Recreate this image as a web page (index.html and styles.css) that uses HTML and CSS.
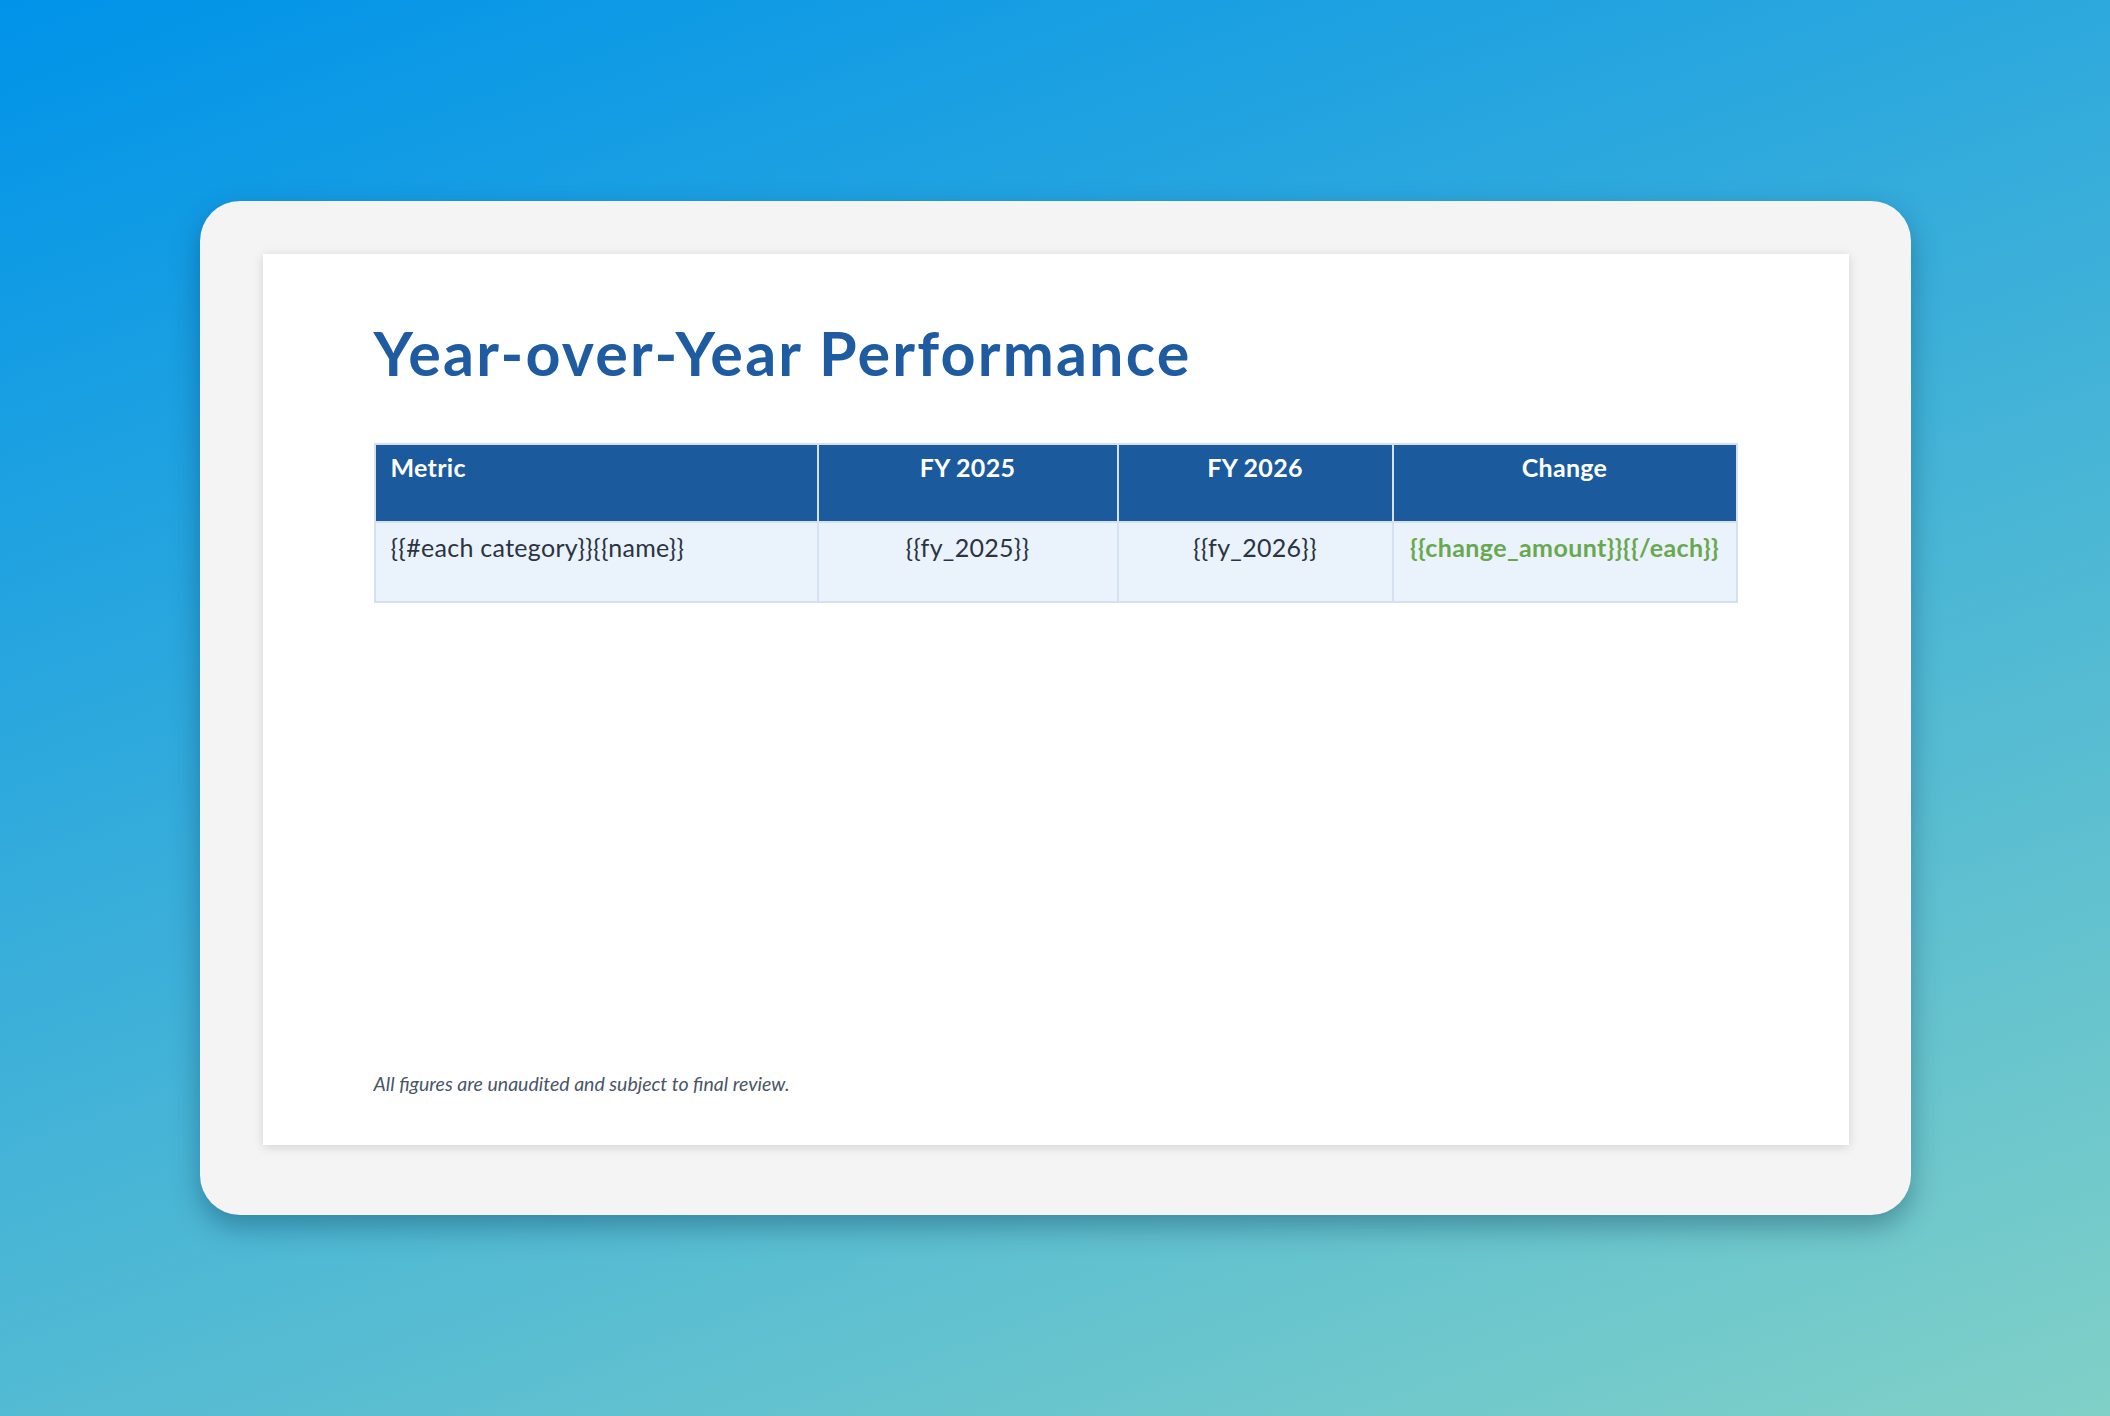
FILE: index.html
```html
<!DOCTYPE html>
<html lang="en">
<head>
<meta charset="utf-8">
<title>Year-over-Year Performance</title>
<link rel="stylesheet" href="styles.css">
</head>
<body>
<div class="stage">
  <div class="card">
    <div class="paper">
      <h1 class="title">Year-over-Year Performance</h1>
      <table class="perf">
        <thead>
          <tr>
            <th class="c-metric">Metric</th>
            <th class="c-2025">FY 2025</th>
            <th class="c-2026">FY 2026</th>
            <th class="c-change">Change</th>
          </tr>
        </thead>
        <tbody>
          <tr>
            <td class="c-metric">{{#each category}}{{name}}</td>
            <td class="c-2025">{{fy_2025}}</td>
            <td class="c-2026">{{fy_2026}}</td>
            <td class="c-change change">{{change_amount}}{{/each}}</td>
          </tr>
        </tbody>
      </table>
      <p class="note">All figures are unaudited and subject to final review.</p>
    </div>
  </div>
</div>
</body>
</html>
```

FILE: styles.css
```css
html, body {
  margin: 0;
  padding: 0;
  height: 100%;
}
body {
  background: linear-gradient(160deg, #0093E9 0%, #80D0C7 100%);
  font-family: Lato, "Open Sans", sans-serif;
}
.stage {
  height: 100vh;
  display: flex;
  align-items: center;
  justify-content: center;
}
.card {
  background: #f4f4f4;
  border-radius: 40px;
  padding: 53px 62px 70px 63px;
  box-shadow: 0 12px 28px rgba(0, 40, 70, 0.35);
}
.paper {
  box-sizing: border-box;
  width: 1586px;
  height: 891px;
  background: #ffffff;
  box-shadow: 0 2px 10px rgba(0, 0, 0, 0.14);
  padding: 62px 111px 50px 111px;
  display: flex;
  flex-direction: column;
}
.title {
  margin: 0;
  font-size: 61px;
  line-height: 1.2;
  font-weight: 700;
  color: #1f5ba1;
  letter-spacing: 2.2px;
}
.perf {
  margin-top: 54px;
  width: 100%;
  border-collapse: collapse;
  font-size: 25px;
  line-height: 1.2;
  letter-spacing: 0.3px;
}
.perf th, .perf td {
  box-sizing: border-box;
  padding: 7px 15px;
  vertical-align: top;
  text-align: center;
  border: 2px solid #d3e1f0;
}
.perf th {
  background: #1c5a9e;
  color: #ffffff;
  font-weight: 700;
  height: 78px;
}
.perf td {
  background: #eaf2fc;
  color: #2a3443;
  height: 80px;
  padding-top: 9px;
}
.perf .c-metric { text-align: left; width: 443px; }
.perf .c-2025 { width: 300px; }
.perf .c-2026 { width: 275px; }
.perf .c-change { width: 344px; }
.perf td.change {
  color: #6aa84f;
  font-weight: 700;
  letter-spacing: 0.4px;
}
.note {
  margin: auto 0 0 0;
  font-size: 19.5px;
  font-style: italic;
  color: #4a5568;
}
```
